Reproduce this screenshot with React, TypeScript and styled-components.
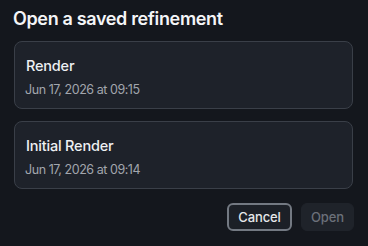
import React from 'react';
import styled, { createGlobalStyle } from 'styled-components';

const GlobalStyle = createGlobalStyle`
  html, body {
    margin: 0;
    padding: 0;
    background: #14171d;
  }
  body {
    font-family: Inter, "Noto Sans", sans-serif;
    -webkit-font-smoothing: antialiased;
  }
`;

type Refinement = { name: string; savedAt: string };

const refinements: Refinement[] = [
  { name: 'Render', savedAt: 'Jun 17, 2026 at 09:15' },
  { name: 'Initial Render', savedAt: 'Jun 17, 2026 at 09:14' },
];

export default function App() {
  return (
    <>
      <GlobalStyle />
      <Dialog>
        <Title>Open a saved refinement</Title>
        <List>
          {refinements.map((r) => (
            <Card key={r.name}>
              <CardName>{r.name}</CardName>
              <CardDate>{r.savedAt}</CardDate>
            </Card>
          ))}
        </List>
        <Footer>
          <Button>Cancel</Button>
          <Button $primary disabled>
            Open
          </Button>
        </Footer>
      </Dialog>
    </>
  );
}

const Dialog = styled.div`
  width: 368px;
  height: 246px;
  box-sizing: border-box;
  padding: 8px 15px 0 14px;
  display: flex;
  flex-direction: column;
  background: #14171d;
`;

const Title = styled.h2`
  margin: 0 0 0 -1px;
  font-size: 18px;
  line-height: 22px;
  font-weight: 600;
  color: #f4f5f7;
  letter-spacing: -0.35px;
`;

const List = styled.div`
  margin-top: 11px;
  display: flex;
  flex-direction: column;
  gap: 12px;
`;

const Card = styled.div`
  box-sizing: border-box;
  height: 68px;
  padding: 14px 12px 0 10px;
  border: 1px solid #3a3f48;
  border-radius: 8px;
  background: #1e222a;
  display: flex;
  flex-direction: column;
  gap: 5px;
`;

const CardName = styled.div`
  font-size: 14.5px;
  line-height: 20px;
  font-weight: 500;
  color: #eef0f3;
  padding-left: 1px;
  letter-spacing: -0.2px;
`;

const CardDate = styled.div`
  font-size: 12.5px;
  line-height: 18px;
  font-weight: 400;
  color: #a2a6ad;
  letter-spacing: -0.45px;
`;

const Footer = styled.div`
  margin-top: 14px;
  display: flex;
  justify-content: flex-end;
  gap: 9px;
  margin-right: -1px;
`;

const Button = styled.button<{ $primary?: boolean }>`
  height: 28px;
  box-sizing: border-box;
  padding: 0;
  border-radius: 6px;
  font-family: inherit;
  font-size: 13px;
  font-weight: 500;
  letter-spacing: -0.1px;
  border: ${(p) => (p.$primary ? '1px solid #1f232a' : '2px solid #737982')};
  background: ${(p) => (p.$primary ? '#1f232a' : '#1c2027')};
  color: ${(p) => (p.$primary ? '#6b7079' : '#e6e8eb')};
  width: ${(p) => (p.$primary ? '53px' : '65px')};
`;
